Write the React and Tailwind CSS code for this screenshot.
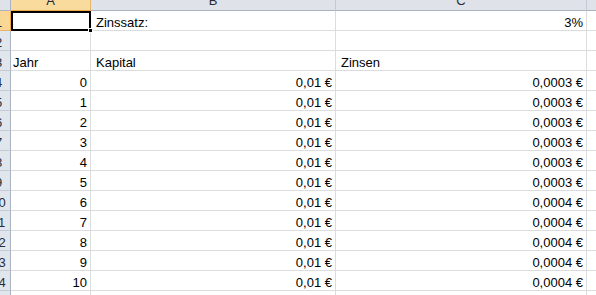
const rows = [
  { a: "", b: "Zinssatz:", c: "3%", cRight: true },
  { a: "", b: "", c: "" },
  { a: "Jahr", b: "Kapital", c: "Zinsen", head: true },
  ...Array.from({ length: 11 }, (_, i) => ({
    a: String(i),
    b: "0,01 €",
    c: i < 6 ? "0,0003 €" : "0,0004 €",
    num: true,
  })),
  { a: "", b: "", c: "" },
];

const ColHeader = ({ label, selected, last }) => (
  <div
    className={`flex h-[11px] items-end justify-center overflow-hidden border-b ${
      last ? "" : "border-r"
    } ${
      selected
        ? "border-b-[#f0a845] border-r-[#e7b46a] bg-[#fadb9e]"
        : "border-b-[#a9b3c1] border-r-[#c3cad4] bg-[#dfe3e9]"
    }`}
  >
    <span className="mb-[2px] text-[13px] leading-[15px] text-[#262d36]">
      {label}
    </span>
  </div>
);

const RowHeader = ({ n, selected }) => (
  <div
    className={`flex h-[20px] items-end overflow-hidden border-r border-b ${
      selected
        ? "border-r-[#f0a845] border-b-[#e7b46a] bg-[#fad794]"
        : "border-r-[#a9b3c1] border-b-[#c3cad4] bg-[#e1e6ed]"
    }`}
  >
    <div className="ml-[-12px] w-[21px] shrink-0 text-center text-[13px] leading-[15px] text-[#262d36]">
      {n}
    </div>
  </div>
);

const Cell = ({ children, right, pl = "pl-[5px]" }) => (
  <div
    className={`flex h-[20px] items-end overflow-hidden border-r border-b border-[#dadcdd] whitespace-nowrap ${
      right ? "justify-end pr-[3px]" : pl
    }`}
  >
    <span className="text-[13px] leading-[15px] text-black">{children}</span>
  </div>
);

export default function App() {
  return (
    <div
      className="relative h-[295px] w-[596px] overflow-hidden bg-white"
      style={{ fontFamily: '"Liberation Sans", Arial, sans-serif' }}
    >
      <div className="grid grid-cols-[11px_80px_245px_251px_9px]">
        <div className="h-[11px] border-r border-b border-r-[#a9b3c1] border-b-[#a9b3c1] bg-[#dfe3e9]" />
        <ColHeader label="A" selected />
        <ColHeader label="B" />
        <ColHeader label="C" />
        <ColHeader label="" last />

        {rows.map((r, i) => (
          <div key={i} className="contents">
            <RowHeader n={i + 1} selected={i === 0} />
            <Cell right={r.num} pl="pl-[2px]">
              {r.a}
            </Cell>
            <Cell right={r.num}>{r.b}</Cell>
            <Cell right={r.num || r.cRight}>{r.c}</Cell>
            <div className="h-[20px] border-b border-[#dadcdd]" />
          </div>
        ))}
      </div>

      <div className="absolute top-[11px] left-[11px] h-[20px] w-[80px] border-2 border-black" />
      <div className="absolute top-[28px] left-[88px] h-[5px] w-[5px] border border-white bg-black" />
    </div>
  );
}
